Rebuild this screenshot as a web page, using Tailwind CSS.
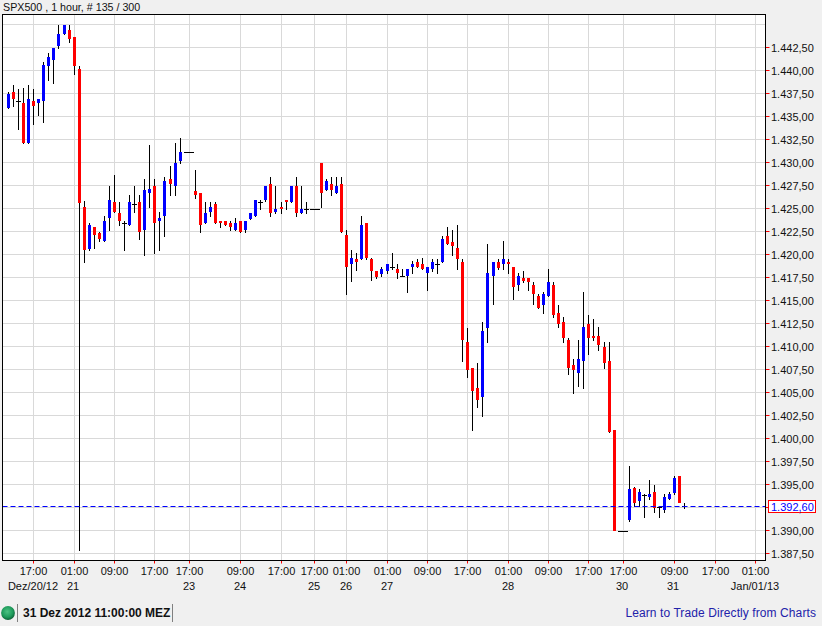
<!DOCTYPE html>
<html>
  <head>
    <meta charset="UTF-8" />
    <title>SPX500 Chart</title>
    <script src="https://cdn.jsdelivr.net/npm/@tailwindcss/browser@4"></script>
  </head>

  <body class="bg-[#f0f0f0] w-[822px] h-[626px] overflow-hidden flex flex-col font-['Liberation_Sans',sans-serif] text-[#111]">
    <!-- Symbol title -->
    <div class="h-[14px] pl-[3px] text-[10.7px] leading-[15px] whitespace-nowrap">SPX500 , 1 hour, # 135 / 300</div>

    <!-- Chart with price and time axes -->
    <svg id="chart" class="block w-[822px] h-[587px]" width="822" height="587" viewBox="0 14 822 587" font-family="'Liberation Sans', sans-serif" font-size="11" fill="#111"></svg>

    <!-- Status bar -->
    <div class="flex items-center h-[25px] pb-[2px] pl-[1px] pr-[6px]">
      <svg class="w-[14px] h-[14px] shrink-0" viewBox="0 0 14 14">
        <defs>
          <radialGradient id="ball" cx="45%" cy="40%" r="62%">
            <stop offset="0" stop-color="#4cc283" />
            <stop offset="0.65" stop-color="#1d9a5a" />
            <stop offset="1" stop-color="#0c5c34" />
          </radialGradient>
        </defs>
        <circle cx="7" cy="7" r="6.9" fill="url(#ball)" />
      </svg>
      <div class="ml-[2px] h-[18px] border-l border-r border-[#808080] px-[5px] w-[156px] text-[12px] leading-[19px] font-bold whitespace-nowrap">31 Dez 2012 11:00:00 MEZ</div>
      <div class="ml-auto text-[12px] tracking-[0.09px] text-[#2222aa] whitespace-nowrap">Learn to Trade Directly from Charts</div>
    </div>

    <script>
      const NS = "http://www.w3.org/2000/svg";
      const svg = document.getElementById("chart");

      function add(tag, attrs, text) {
        const el = document.createElementNS(NS, tag);
        for (const k in attrs) el.setAttribute(k, attrs[k]);
        if (text) el.textContent = text;
        svg.appendChild(el);
      }

      // plot frame
      const L = 2.5, T = 14.5, R = 765.5, B = 560.5;
      add("rect", { x: L, y: T, width: R - L, height: B - T, fill: "#fff" });

      // price grid, one line every 2,50
      for (let i = 0; i < 24; i++) {
        const y = 24.5 + 23 * i;
        add("path", { d: `M${L} ${y}H${R}`, stroke: "#d9d9d9" });
        if (i === 0) continue;
        add("path", { d: `M${R} ${y}h4`, stroke: "#f00" });
        const s = (1445 - 2.5 * i).toFixed(2).replace(".", ",");
        add("text", { x: 771, y: y + 4.5 }, s.slice(0, 1) + "." + s.slice(1));
      }

      // time grid
      const times = [
        [33, "17:00"], [74, "01:00"], [114, "09:00"], [154, "17:00"], [189, "17:00"],
        [240, "09:00"], [281, "17:00"], [314, "17:00"], [346, "01:00"], [387, "01:00"],
        [427, "09:00"], [467, "17:00"], [508, "01:00"], [548, "09:00"], [588, "17:00"],
        [623, "17:00"], [674, "09:00"], [715, "17:00"], [755, "01:00"],
      ];
      times.forEach(([x, t]) => {
        add("path", { d: `M${x + 0.5} ${T}V${B}`, stroke: "#d9d9d9" });
        add("path", { d: `M${x + 0.5} ${B}v3`, stroke: "#f00" });
        add("text", { x: x + 0.5, y: 575, "text-anchor": "middle" }, t);
      });
      const days = [
        [33, "Dez/20/12"], [73, "21"], [189, "23"], [240, "24"], [314, "25"], [346, "26"],
        [387, "27"], [508, "28"], [622, "30"], [673, "31"], [755, "Jan/01/13"],
      ];
      days.forEach(([x, t]) => add("text", { x: x, y: 590, "text-anchor": "middle" }, t));

      // candles: x, wick top, wick bottom, body top, body bottom, colour ("d" = flat doji)
      const candles = [
        [8,92,109,94,108,"b"],[13,85,107,92,99,"r"],[18,89,130,101,101,"d"],[23,88,144,103,143,"r"],
        [28,85,144,99,143,"b"],[33,89,125,101,106,"r"],[38,99,116,99,103,"b"],[43,62,123,65,101,"b"],
        [48,53,81,57,66,"b"],[53,48,84,48,60,"b"],[58,25,49,34,46,"b"],[64,25,35,25,34,"b"],
        [69,25,43,30,39,"r"],[74,37,75,37,66,"r"],[79,66,551,69,203,"r"],[84,201,263,207,250,"r"],
        [89,223,251,225,249,"b"],[94,227,249,227,235,"r"],[99,232,242,233,239,"r"],[104,216,242,221,241,"b"],
        [109,186,231,200,218,"b"],[114,175,213,202,212,"r"],[119,202,226,213,221,"r"],[124,221,251,223,223,"d"],
        [129,195,226,202,225,"b"],[134,186,213,204,204,"d"],[139,195,240,202,232,"r"],[144,179,256,190,230,"b"],
        [149,145,208,189,193,"b"],[154,179,254,186,223,"r"],[159,212,251,218,221,"b"],[164,177,237,181,216,"b"],
        [170,166,196,179,184,"r"],[175,143,196,163,186,"b"],[180,138,164,152,161,"b"],
        [186,152,152,152,152,"d"],[191,152,152,152,152,"d"],[195,170,199,191,195,"r"],[200,193,233,193,225,"r"],
        [205,202,224,213,223,"b"],[210,202,217,207,212,"b"],[215,202,224,204,223,"r"],[220,221,228,221,223,"r"],
        [225,221,226,221,225,"r"],[230,221,231,223,227,"r"],[235,218,231,223,230,"b"],[240,221,233,221,232,"r"],
        [245,221,233,221,230,"b"],[250,213,220,213,219,"b"],[255,200,217,200,216,"b"],[260,200,210,202,202,"d"],
        [265,186,202,186,200,"b"],[270,177,217,184,213,"r"],[275,186,214,209,212,"b"],[281,202,214,207,209,"r"],
        [286,200,210,200,202,"r"],[291,186,203,186,202,"b"],[296,177,217,186,213,"r"],[301,186,214,209,213,"b"],
        [306,202,214,209,209,"d"],[312,209,209,209,209,"d"],[317,209,209,209,209,"d"],[321,163,208,163,193,"r"],
        [326,179,191,181,190,"b"],[331,177,196,184,190,"r"],[336,177,194,186,193,"b"],[341,177,233,184,232,"r"],
        [346,230,295,235,267,"r"],[351,250,282,258,264,"b"],[356,253,271,259,262,"r"],[361,216,260,225,259,"b"],
        [366,223,260,223,258,"r"],[371,258,281,259,271,"r"],[376,271,279,271,277,"r"],[381,267,277,269,274,"b"],
        [387,264,274,264,271,"b"],[392,253,270,267,267,"d"],[397,264,279,269,273,"r"],[402,269,277,276,276,"d"],
        [407,269,293,269,276,"b"],[412,261,274,264,267,"b"],[417,259,268,262,267,"r"],[422,258,270,264,269,"r"],
        [427,267,291,267,273,"b"],[432,259,272,262,269,"b"],[437,259,274,264,264,"d"],[442,236,263,239,262,"b"],
        [447,227,245,236,244,"r"],[452,230,256,242,246,"r"],[457,225,270,248,259,"r"],[462,259,362,262,340,"r"],
        [467,328,378,342,370,"r"],[472,368,431,368,391,"r"],[477,363,408,388,400,"r"],[482,322,417,331,397,"b"],
        [487,244,343,273,328,"b"],[493,262,305,262,276,"b"],[498,259,270,262,268,"r"],[503,241,270,259,264,"b"],
        [508,259,274,262,264,"r"],[513,267,300,267,287,"r"],[518,273,291,276,285,"b"],[523,271,283,278,281,"r"],
        [528,278,291,278,282,"r"],[533,282,305,285,294,"r"],[538,294,309,296,308,"r"],[543,292,314,294,305,"b"],
        [548,269,297,282,296,"b"],[553,282,318,285,315,"r"],[558,305,328,313,324,"r"],[563,317,343,322,338,"r"],
        [568,338,375,340,368,"r"],[573,359,394,365,370,"r"],[578,340,387,359,373,"b"],[583,292,389,327,361,"b"],
        [588,315,355,324,338,"r"],[593,319,341,336,338,"r"],[598,327,351,336,345,"r"],[604,342,369,347,363,"r"],
        [609,342,433,361,432,"r"],[614,430,531,430,531,"r"],[620,531,531,531,531,"d"],[625,531,531,531,531,"d"],
        [629,466,522,489,520,"b"],[634,487,507,488,503,"r"],[639,489,507,492,501,"b"],[644,494,518,495,495,"d"],
        [649,480,500,494,497,"b"],[654,485,513,492,508,"r"],[659,507,518,507,507,"d"],[664,494,513,497,510,"b"],
        [669,492,500,494,499,"b"],[674,476,495,478,493,"b"],[679,476,503,476,503,"r"],[684,503,509,506,506,"d"],
      ];

      let wicks = "", reds = "", blues = "";
      candles.forEach(([x, hi, lo, top, bot, c]) => {
        if (hi !== lo) wicks += `M${x + 0.5} ${hi}V${lo}`;
        if (c === "d") wicks += `M${x - 2} ${top + 0.5}h5`;
        else if (c === "r") reds += `M${x - 1} ${top}h3V${bot}h-3z`;
        else blues += `M${x - 1} ${top}h3V${bot}h-3z`;
      });
      add("path", { d: wicks, stroke: "#000", fill: "none" });
      add("path", { d: reds, fill: "#f00" });
      add("path", { d: blues, fill: "#00f" });

      // last price line
      add("path", { d: `M${L} 506.5H${R}`, stroke: "#00f", "stroke-dasharray": "5 3" });

      // frame on top of the grid
      add("rect", { x: L, y: T, width: R - L, height: B - T, fill: "none", stroke: "#000" });

      // last price flag
      add("rect", { x: 768.5, y: 500.5, width: 47, height: 12, fill: "#fff", stroke: "#f00" });
      add("text", { x: 771, y: 510.5, fill: "#00f" }, "1.392,60");
    </script>
  </body>
</html>
